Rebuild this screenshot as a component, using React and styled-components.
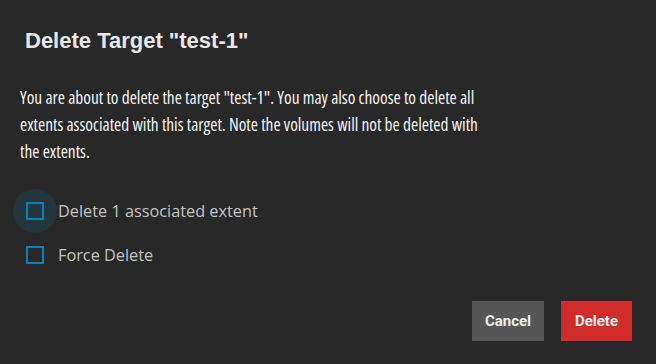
import styled, { createGlobalStyle } from 'styled-components'

const GlobalStyle = createGlobalStyle`
  html, body {
    margin: 0;
    padding: 0;
    background: #282828;
  }
`

const Dialog = styled.div`
  width: 656px;
  height: 364px;
  box-sizing: border-box;
  background: #282828;
  display: flex;
  flex-direction: column;
  padding: 27px 24px 23px 20px;
`

const Title = styled.h1`
  margin: 0 0 0 5px;
  font-family: "Liberation Sans", Arial, sans-serif;
  font-weight: 700;
  font-size: 22px;
  line-height: 28px;
  color: #e8e8e8;
`

const Message = styled.p`
  margin: 29px 0 0;
  max-width: 465px;
  font-family: "Open Sans", sans-serif;
  font-stretch: 75%;
  font-size: 17.4px;
  line-height: 27px;
  color: #f2f2f2;
`

const Options = styled.div`
  display: flex;
  flex-direction: column;
  gap: 14px;
  margin-top: 31px;
`

const Option = styled.label`
  display: flex;
  align-items: center;
  height: 30px;
  gap: 14px;
  font-family: "Open Sans", sans-serif;
  font-size: 16.3px;
  color: #c4c4c4;
`

const BoxWrap = styled.span`
  position: relative;
  width: 18px;
  height: 18px;
  margin-left: 6px;
  flex: none;

  &::before {
    content: '';
    display: ${({ $focused }) => ($focused ? 'block' : 'none')};
    position: absolute;
    left: -13px;
    top: -13px;
    width: 44px;
    height: 44px;
    border-radius: 50%;
    background: rgba(0, 149, 213, 0.12);
  }
`

const Box = styled.span`
  position: relative;
  display: block;
  width: 18px;
  height: 18px;
  box-sizing: border-box;
  border: 2px solid #0c80b8;
`

const Actions = styled.div`
  margin-top: auto;
  display: flex;
  justify-content: flex-end;
  gap: 17px;
`

const Button = styled.button`
  height: 40px;
  padding: 0;
  border: none;
  border-radius: 0;
  font-family: Roboto, "Liberation Sans", sans-serif;
  font-weight: 700;
  font-size: 15px;
  color: #f0f0f0;
  background: ${({ $danger }) => ($danger ? '#d22b2b' : '#565656')};
  width: ${({ $danger }) => ($danger ? '71px' : '72px')};
`

export default function App() {
  return (
    <>
      <GlobalStyle />
      <Dialog>
        <Title>Delete Target "test-1"</Title>
        <Message>
          You are about to delete the target "test-1". You may also choose to delete all
          extents associated with this target. Note the volumes will not be deleted with
          the extents.
        </Message>
        <Options>
          <Option>
            <BoxWrap $focused>
              <Box />
            </BoxWrap>
            Delete 1 associated extent
          </Option>
          <Option>
            <BoxWrap>
              <Box />
            </BoxWrap>
            Force Delete
          </Option>
        </Options>
        <Actions>
          <Button>Cancel</Button>
          <Button $danger>Delete</Button>
        </Actions>
      </Dialog>
    </>
  )
}
